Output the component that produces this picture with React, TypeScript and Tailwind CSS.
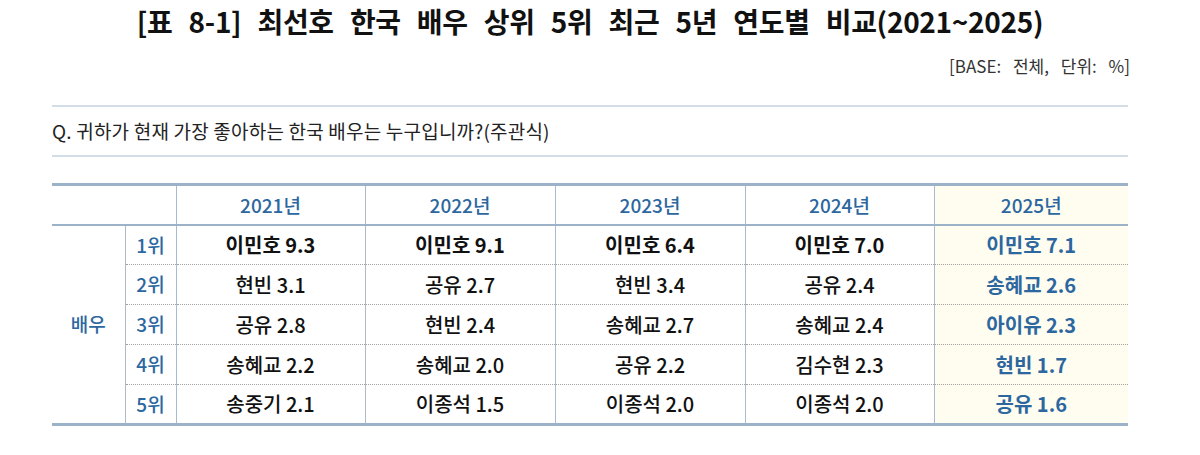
import React from "react";

const years = ["2021년", "2022년", "2023년", "2024년", "2025년"];
const rows: string[][] = [
  ["이민호 9.3", "이민호 9.1", "이민호 6.4", "이민호 7.0", "이민호 7.1"],
  ["현빈 3.1", "공유 2.7", "현빈 3.4", "공유 2.4", "송혜교 2.6"],
  ["공유 2.8", "현빈 2.4", "송혜교 2.7", "송혜교 2.4", "아이유 2.3"],
  ["송혜교 2.2", "송혜교 2.0", "공유 2.2", "김수현 2.3", "현빈 1.7"],
  ["송중기 2.1", "이종석 1.5", "이종석 2.0", "이종석 2.0", "공유 1.6"],
];

const font = { fontFamily: '"Noto Sans CJK KR", "Noto Sans", sans-serif' };

export default function App() {
  return (
    <div className="w-[1200px] h-[455px] bg-white overflow-hidden text-[#1a1a1a]" style={font}>
      <div className="pt-[2px] pr-[20px] h-[44px] text-center text-[28px] font-bold leading-[38px] tracking-[-0.3px] [word-spacing:10px] text-[#111]">
        [표 8-1] 최선호 한국 배우 상위 5위 최근 5년 연도별 비교(2021~2025)
      </div>
      <div className="h-[44px] pr-[70px] text-right text-[17px] leading-[44px] text-[#333] tracking-[0px] [word-spacing:8px]">
        [BASE: 전체, 단위: %]
      </div>
      <div className="ml-[52px] w-[1076px]">
        <div className="h-[17px]" />
        <div className="border-t-2 border-[#d3dde7] h-[50px] flex items-center text-[19px] text-[#222] tracking-[0.2px]">
          Q. 귀하가 현재 가장 좋아하는 한국 배우는 누구입니까?(주관식)
        </div>
        <div className="border-t-2 border-[#d3dde7] h-[28px]" />
        <table className="w-[1076px] border-collapse table-fixed text-[20px]">
          <colgroup>
            <col className="w-[73px]" />
            <col className="w-[51px]" />
            <col className="w-[189px]" />
            <col className="w-[190px]" />
            <col className="w-[190px]" />
            <col className="w-[189px]" />
            <col className="w-[194px]" />
          </colgroup>
          <thead>
            <tr className="h-[40px] border-t-[3px] border-b-2 border-[#9bb2c9]">
              <th colSpan={2} className="border-r border-[#a9bccf]" />
              {years.map((y, i) => (
                <th
                  key={y}
                  className={`font-medium text-[19px] text-[#2c67a0] ${i < 4 ? "border-r border-[#a9bccf]" : "bg-[#fffdf0]"}`}
                >
                  {y}
                </th>
              ))}
            </tr>
          </thead>
          <tbody>
            {rows.map((r, ri) => (
              <tr
                key={ri}
                className={`h-[40px] ${ri === 4 ? "border-b-[3px] border-[#9bb2c9]" : ""}`}
              >
                {ri === 0 && (
                  <td rowSpan={5} className="text-center text-[19px] text-[#2c67a0] font-medium border-r border-[#a9bccf] border-b-[3px] border-b-[#9bb2c9]">
                    배우
                  </td>
                )}
                <td
                  className={`text-center text-[19px] text-[#2c67a0] font-medium border-r border-[#a9bccf] ${ri < 4 ? "border-b border-b-[#a3a3a3] border-dotted" : ""}`}
                  style={{ borderRightStyle: "solid" }}
                >
                  {ri + 1}위
                </td>
                {r.map((v, ci) => (
                  <td
                    key={ci}
                    className={`text-center ${ri < 4 ? "border-b border-b-[#a3a3a3] border-dotted" : ""} ${
                      ci < 4
                        ? `border-r border-[#a9bccf] text-[#111] ${ri === 0 ? "font-semibold" : "font-medium"}`
                        : "bg-[#fffdf0] text-[#2c67a0] font-semibold"
                    }`}
                    style={{ borderRightStyle: "solid" }}
                  >
                    {v}
                  </td>
                ))}
              </tr>
            ))}
          </tbody>
        </table>
      </div>
    </div>
  );
}
